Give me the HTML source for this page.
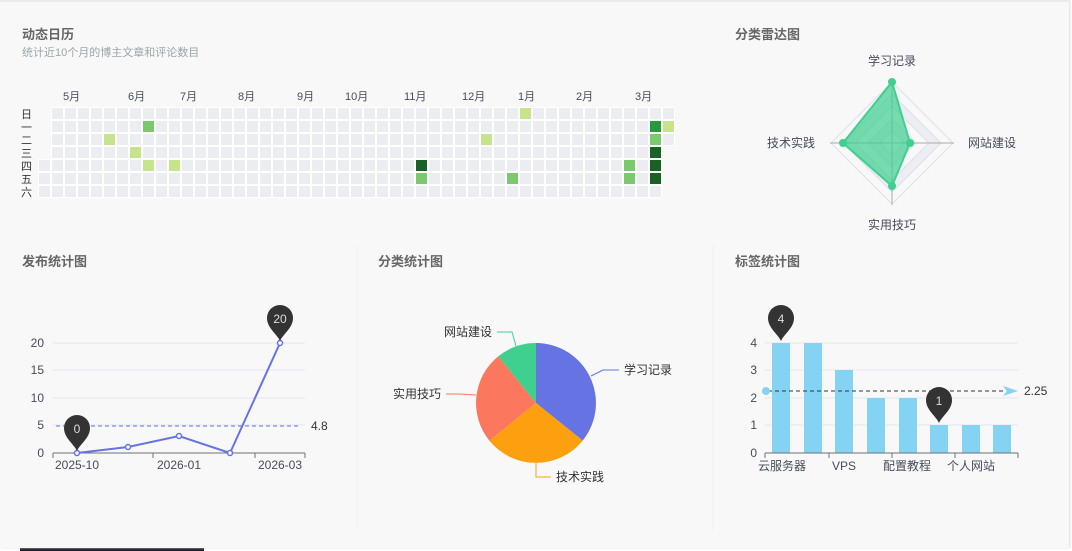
<!DOCTYPE html>
<html><head><meta charset="utf-8"><style>
html,body{margin:0;padding:0;width:1072px;height:551px;overflow:hidden;background:#fff;font-family:"Liberation Sans","Noto Sans CJK SC",sans-serif}
#card{position:absolute;left:0;top:0;width:1069px;height:548px;background:#f8f8f8;border-top:2px solid #e8ecec;box-sizing:border-box;box-shadow:1px 0 2px #ddd}
.t{position:absolute;font-size:13px;font-weight:bold;color:#666}
.s{position:absolute;font-size:11px;color:#9aa5aa}
svg text{font-family:"Liberation Sans","Noto Sans CJK SC",sans-serif}
</style></head><body>
<div style="position:absolute;left:20px;top:548px;width:184px;height:3px;background:#1a1f2a"></div>
<div id="card">
<div class="t" style="left:22px;top:22px">动态日历</div>
<div class="s" style="left:22px;top:42px">统计近10个月的博主文章和评论数目</div>
<div class="t" style="left:735px;top:22px">分类雷达图</div>
<div class="t" style="left:22px;top:249px">发布统计图</div>
<div class="t" style="left:378px;top:249px">分类统计图</div>
<div class="t" style="left:735px;top:249px">标签统计图</div>
</div>
<svg width="1072" height="551" style="position:absolute;left:0;top:0" id="sv">
<g id="grid"></g>
<g font-size="11" fill="#464c5b">
<text x="63" y="100">5月</text><text x="128" y="100">6月</text><text x="180" y="100">7月</text><text x="238" y="100">8月</text><text x="297" y="100">9月</text><text x="345" y="100">10月</text><text x="404" y="100">11月</text><text x="462" y="100">12月</text><text x="518" y="100">1月</text><text x="576" y="100">2月</text><text x="635" y="100">3月</text>
</g>
<g font-size="11" fill="#333">
<text x="21" y="118">日</text><text x="21" y="131">一</text><text x="21" y="144">二</text><text x="21" y="157">三</text><text x="21" y="170">四</text><text x="21" y="183">五</text><text x="21" y="196">六</text>
</g>
<line x1="357" y1="245" x2="357" y2="530" stroke="#f0f0f0"/>
<line x1="713" y1="245" x2="713" y2="530" stroke="#f0f0f0"/>
<!-- radar -->
<g transform="translate(892,143)">
<polygon points="0,-61 61,0 0,61 -61,0" fill="#f8f8f8" stroke="#dde0ea"/>
<polygon points="0,-49 49,0 0,49 -49,0" fill="#eceef4" stroke="#dde0ea"/>
<polygon points="0,-37 37,0 0,37 -37,0" fill="#f8f8f8" stroke="#dde0ea"/>
<polygon points="0,-24 24,0 0,24 -24,0" fill="#eceef4" stroke="#dde0ea"/>
<polygon points="0,-12 12,0 0,12 -12,0" fill="#f8f8f8" stroke="#dde0ea"/>
<line x1="-62" y1="0" x2="62" y2="0" stroke="#aaa"/><line x1="0" y1="-61" x2="0" y2="62" stroke="#aaa"/>
<polygon points="0,-61 18,0 0,43 -49,0" fill="#3fcf8e" fill-opacity=".7" stroke="#3fcf8e" stroke-width="2"/>
<circle cx="0" cy="-61" r="4" fill="#3fcf8e"/><circle cx="18" cy="0" r="4" fill="#3fcf8e"/><circle cx="0" cy="43" r="4" fill="#3fcf8e"/><circle cx="-49" cy="0" r="4" fill="#3fcf8e"/>
</g>
<g font-size="12" fill="#464c5b">
<text x="892" y="65" text-anchor="middle">学习记录</text>
<text x="968" y="147">网站建设</text>
<text x="892" y="229" text-anchor="middle">实用技巧</text>
<text x="815" y="147" text-anchor="end">技术实践</text>
</g>
<!-- line chart -->
<g stroke="#e0e6f1"><line x1="53" y1="343" x2="305" y2="343"/><line x1="53" y1="370" x2="305" y2="370"/><line x1="53" y1="398" x2="305" y2="398"/><line x1="53" y1="425" x2="305" y2="425"/></g>
<line x1="53" y1="453" x2="305" y2="453" stroke="#6e7079"/>
<g stroke="#6e7079"><line x1="53" y1="453" x2="53" y2="458"/><line x1="153" y1="453" x2="153" y2="458"/><line x1="255" y1="453" x2="255" y2="458"/><line x1="305" y1="453" x2="305" y2="458"/></g>
<g font-size="12" fill="#464c5b" text-anchor="end"><text x="44" y="347">20</text><text x="44" y="374">15</text><text x="44" y="402">10</text><text x="44" y="429">5</text><text x="44" y="457">0</text></g>
<g font-size="12" fill="#464c5b" text-anchor="middle"><text x="77" y="469">2025-10</text><text x="179" y="469">2026-01</text><text x="280" y="469">2026-03</text></g>
<line x1="56" y1="426" x2="300" y2="426" stroke="#6673e3" stroke-dasharray="4,3"/>
<text x="311" y="430" font-size="12" fill="#333">4.8</text>
<polyline points="77,453 128,447 179,436 230,453 280,343" fill="none" stroke="#6673e3" stroke-width="2"/>
<g fill="#fff" stroke="#6673e3" stroke-width="1.5"><circle cx="77" cy="453" r="2.5"/><circle cx="128" cy="447" r="2.5"/><circle cx="179" cy="436" r="2.5"/><circle cx="230" cy="453" r="2.5"/><circle cx="280" cy="343" r="2.5"/></g>
<path d="M77,451 C74,444 64,438 64,428 A13,13 0 1 1 90,428 C90,438 80,444 77,451Z" fill="#333"/>
<text x="77" y="433" font-size="12" fill="#ddd" text-anchor="middle">0</text>
<path d="M280,341 C277,334 267,328 267,318 A13,13 0 1 1 293,318 C293,328 283,334 280,341Z" fill="#333"/>
<text x="280" y="323" font-size="12" fill="#ddd" text-anchor="middle">20</text>
<!-- pie -->
<g transform="translate(536,403)">
<path d="M0,0 L0,-60 A60,60 0 0 1 46.7,37.6 Z" fill="#6673e3"/>
<path d="M0,0 L46.7,37.6 A60,60 0 0 1 -46.6,37.7 Z" fill="#fda010"/>
<path d="M0,0 L-46.6,37.7 A60,60 0 0 1 -37.7,-46.7 Z" fill="#fb775e"/>
<path d="M0,0 L-37.7,-46.7 A60,60 0 0 1 0,-60 Z" fill="#3fcf8e"/>
</g>
<polyline points="591,376 603,370 619,370" fill="none" stroke="#6673e3"/>
<polyline points="536,463 536,477 551,477" fill="none" stroke="#fda010"/>
<polyline points="476,395 460,394 446,394" fill="none" stroke="#fb775e"/>
<polyline points="516,346 512,332 497,332" fill="none" stroke="#3fcf8e"/>
<g font-size="12" fill="#333"><text x="624" y="374">学习记录</text><text x="556" y="481">技术实践</text><text x="441" y="398" text-anchor="end">实用技巧</text><text x="492" y="336" text-anchor="end">网站建设</text></g>
<!-- bar chart -->
<g stroke="#e0e6f1"><line x1="765" y1="343" x2="1018" y2="343"/><line x1="765" y1="370" x2="1018" y2="370"/><line x1="765" y1="398" x2="1018" y2="398"/><line x1="765" y1="425" x2="1018" y2="425"/></g>
<g fill="#84d3f3">
<rect x="772" y="343" width="18" height="110"/><rect x="804" y="343" width="18" height="110"/><rect x="835" y="370" width="18" height="83"/><rect x="867" y="398" width="18" height="55"/><rect x="899" y="398" width="18" height="55"/><rect x="930" y="425" width="18" height="28"/><rect x="962" y="425" width="18" height="28"/><rect x="993" y="425" width="18" height="28"/>
</g>
<line x1="765" y1="453" x2="1018" y2="453" stroke="#6e7079"/>
<g stroke="#6e7079"><line x1="765" y1="453" x2="765" y2="458"/><line x1="829" y1="453" x2="829" y2="458"/><line x1="892" y1="453" x2="892" y2="458"/><line x1="955" y1="453" x2="955" y2="458"/><line x1="1018" y1="453" x2="1018" y2="458"/></g>
<g font-size="12" fill="#464c5b" text-anchor="end"><text x="757" y="347">4</text><text x="757" y="374">3</text><text x="757" y="402">2</text><text x="757" y="429">1</text><text x="757" y="457">0</text></g>
<g font-size="12" fill="#464c5b" text-anchor="middle"><text x="782" y="470">云服务器</text><text x="844" y="470">VPS</text><text x="907" y="470">配置教程</text><text x="971" y="470">个人网站</text></g>
<line x1="768" y1="391" x2="1005" y2="391" stroke="#333" stroke-dasharray="4,3"/>
<circle cx="766" cy="391" r="4" fill="#84d3f3"/>
<path d="M1003,386 L1018,391 L1003,396 L1007,391Z" fill="#84d3f3"/>
<text x="1024" y="395" font-size="12" fill="#333">2.25</text>
<path d="M781,341 C778,334 768,328 768,318 A13,13 0 1 1 794,318 C794,328 784,334 781,341Z" fill="#333"/>
<text x="781" y="323" font-size="12" fill="#ddd" text-anchor="middle">4</text>
<path d="M939,423 C936,416 926,410 926,400 A13,13 0 1 1 952,400 C952,410 942,416 939,423Z" fill="#333"/>
<text x="939" y="405" font-size="12" fill="#ddd" text-anchor="middle">1</text>
</svg>
<script>
var g=document.getElementById('grid'),h='';
var L='#c6e48b',M='#7bc96f',D='#196127',G='#239a3b';
var sp={'8,1':M,'5,2':L,'7,3':L,'8,4':L,'10,4':L,'37,0':L,'29,4':D,'29,5':M,'34,2':L,'36,5':M,'45,4':M,'45,5':M,'47,1':G,'47,2':M,'47,3':D,'47,4':D,'47,5':D,'48,1':L};
for(var c=0;c<49;c++){for(var r=0;r<7;r++){if(c==0&&r<4)continue;if(c==48&&r>2)continue;
var x=39+c*13,y=108+r*13;var f=sp[c+','+r]||'#ebedf0';
h+='<rect x="'+(x-1)+'" y="'+(y-1)+'" width="13" height="13" fill="#fff"/><rect x="'+x+'" y="'+y+'" width="11" height="11" fill="'+f+'"/>';}}
g.innerHTML=h;
</script>
</body></html>
